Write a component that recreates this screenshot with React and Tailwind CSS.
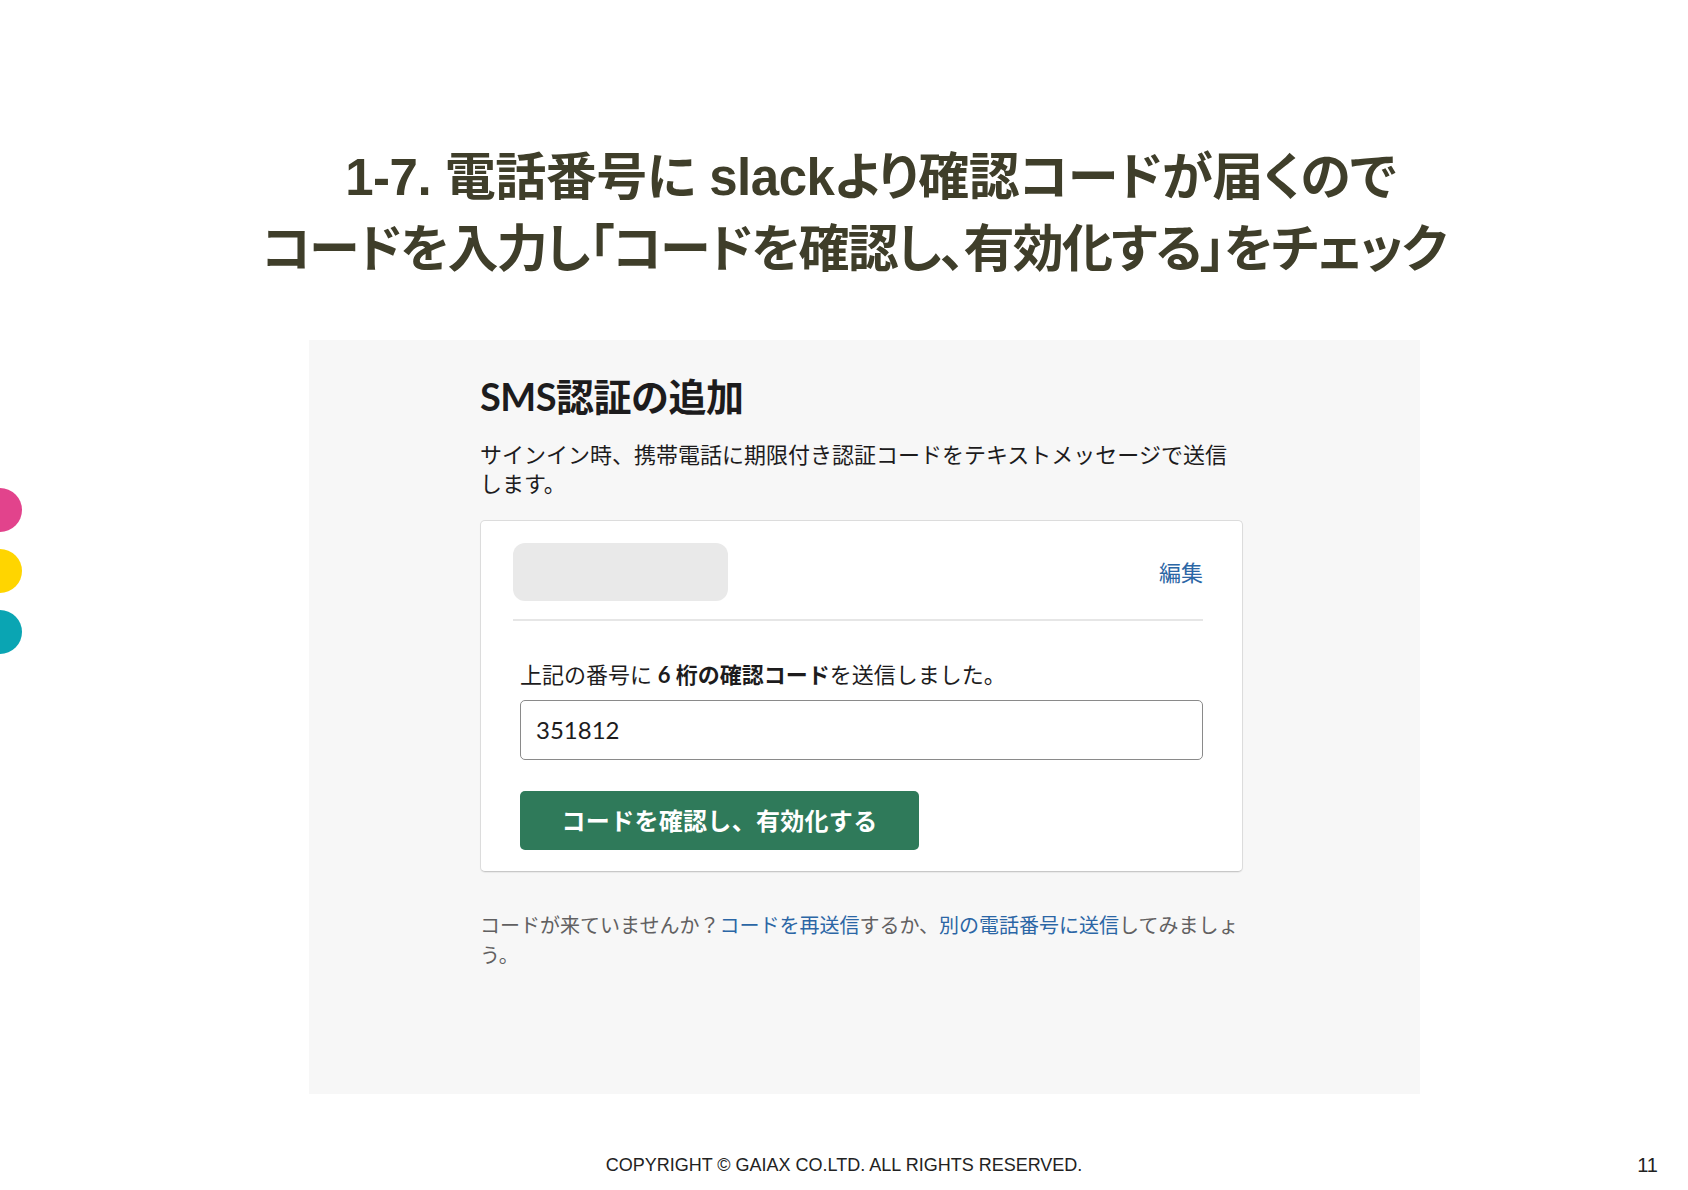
import React from "react";

const ui = "font-['Lato','Noto_Sans_CJK_JP',sans-serif]";

const Dots = () => (
  <div className="absolute left-0 top-[488px] flex flex-col gap-[17px]">
    <span className="block w-[44px] h-[44px] -ml-[22px] rounded-full bg-[#e2438c]" />
    <span className="block w-[44px] h-[44px] -ml-[22px] rounded-full bg-[#ffd500]" />
    <span className="block w-[44px] h-[44px] -ml-[22px] rounded-full bg-[#0aa5b3]" />
  </div>
);

const SmsCard = () => (
  <div className={`bg-[#f7f7f7] w-[1111px] h-[754px] pl-[171px] pt-[32px] ${ui}`}>
    <div className="w-[763px]">
      <h1 className="text-[38px] leading-[48px] font-bold text-[#1d1c1d] tracking-[-0.5px]">
        SMS認証の追加
      </h1>
      <p className="mt-[20px] text-[22px] leading-[29px] text-[#1d1c1d]">
        サインイン時、携帯電話に期限付き認証コードをテキストメッセージで送信します。
      </p>

      <div className="mt-[22px] bg-white border border-[#dcdcdc] border-b-[#c8c8c8] rounded-[5px] px-[39px] pt-[22px] pb-[21px] shadow-[0_1px_1px_rgba(0,0,0,0.06)]">
        <div className="flex items-center justify-between -ml-[7px] pb-[18px] border-b-2 border-[#e6e6e6]">
          <div className="w-[215px] h-[58px] rounded-[12px] bg-[#e9e9e9]" />
          <span className="text-[22px] text-[#2b66a5]">編集</span>
        </div>

        <p className="mt-[39px] text-[22px] leading-[30px] text-[#1d1c1d]">
          上記の番号に <b className="font-bold">6 桁の確認コード</b>を送信しました。
        </p>

        <div className="mt-[10px] h-[60px] border border-[#8a8a8a] rounded-[5px] flex items-center px-[15px] text-[24px] text-[#1d1c1d]">
          351812
        </div>

        <button className="mt-[31px] w-[399px] h-[59px] rounded-[5px] bg-[#2f7a5a] text-white text-[24px] font-bold tracking-[0.3px]">
          コードを確認し、有効化する
        </button>
      </div>

      <p className="mt-[38px] text-[20px] leading-[30px] text-[#616061]">
        コードが来ていませんか？<span className="text-[#2b66a5]">コードを再送信</span>するか、
        <span className="text-[#2b66a5]">別の電話番号に送信</span>してみましょう。
      </p>
    </div>
  </div>
);

export default function App() {
  return (
    <div className="relative w-[1688px] h-[1190px] bg-white overflow-hidden">
      <Dots />

      <div className="ml-[309px] w-[1111px] pt-[142px] flex flex-col items-center whitespace-nowrap font-['Liberation_Sans','Noto_Sans_CJK_JP',sans-serif] font-bold text-[51px] leading-[72px] text-[#3f3e2a] [font-feature-settings:'palt']">
        <div className="ml-[12px] tracking-[-0.5px]">1-7. 電話番号に slackより確認コードが届くので</div>
        <div className="-ml-[22px] tracking-[-1.8px]">コードを入力し「コードを確認し、有効化する」をチェック</div>
      </div>

      <div className="ml-[309px] mt-[54px]">
        <SmsCard />
      </div>

      <div className="mt-[59px] grid grid-cols-[1fr_auto_1fr] items-center font-['Liberation_Sans',sans-serif] text-[18px] leading-[24px] text-[#222]">
        <span />
        <span>COPYRIGHT © GAIAX CO.LTD. ALL RIGHTS RESERVED.</span>
        <span className="text-right pr-[30px] text-[20px]">11</span>
      </div>
    </div>
  );
}
